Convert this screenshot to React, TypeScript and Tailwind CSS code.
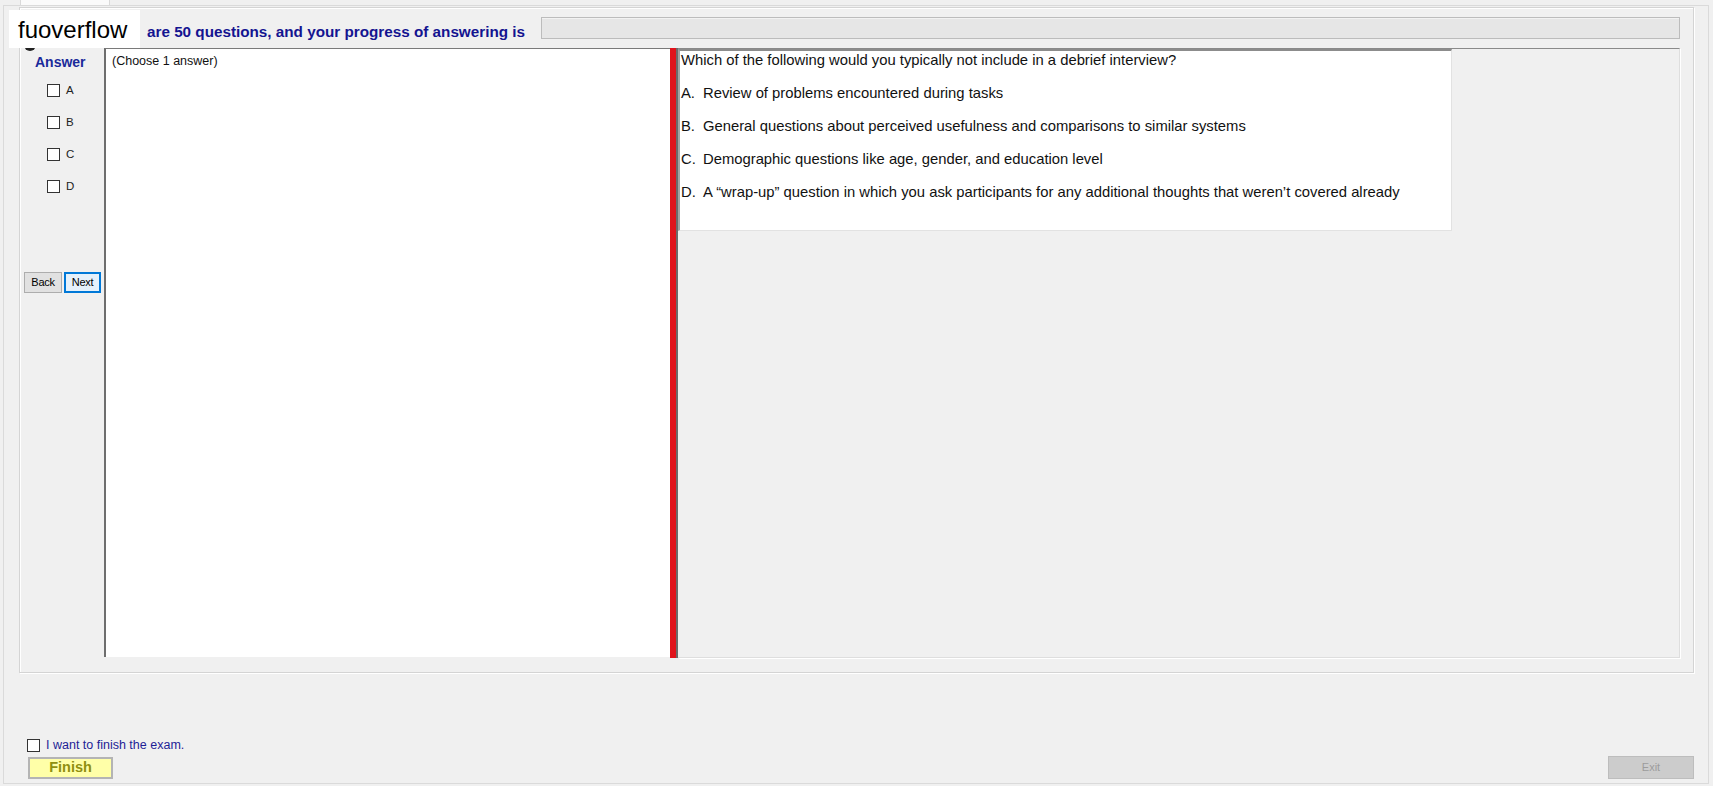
export default function App() {
  const options = [
    ["A.", "Review of problems encountered during tasks"],
    ["B.", "General questions about perceived usefulness and comparisons to similar systems"],
    ["C.", "Demographic questions like age, gender, and education level"],
    ["D.", "A \u201cwrap-up\u201d question in which you ask participants for any additional thoughts that weren\u2019t covered already"],
  ];
  return (
    <div className="w-[1713px] h-[786px] bg-[#f0f0f0] relative overflow-hidden font-['Liberation_Sans',Arial,sans-serif] text-black">
      {/* tab strip */}
      <div className="h-[5px] flex">
        <div className="ml-[20px] w-[90px] h-[5px] bg-[#fafafa] border-x border-[#d9d9d9]" />
      </div>
      {/* outer frame */}
      <div className="ml-[3px] w-[1706px] h-[779px] border border-[#dadada] flex flex-col">
        {/* group box */}
        <div className="mt-[1px] ml-[15px] w-[1675px] h-[666px] border border-[#d4d4d4] shadow-[inset_1px_1px_0_#ffffff,1px_1px_0_#ffffff] flex flex-col">
          {/* header */}
          <div className="h-[40px] flex shrink-0">
            <div className="ml-[127px] w-[394px] pt-[15px] text-[15.25px] leading-[18px] font-bold text-[#141490] whitespace-nowrap">
              are 50 questions, and your progress of answering is
            </div>
            <div className="mt-[9px] h-[22px] w-[1139px] border border-[#bcbcbc] bg-[#e6e6e6] shadow-[inset_0_1px_0_#f2f2f2]" />
          </div>
          {/* main panel */}
          <div className="flex h-[610px] w-[1660px] shrink-0">
            {/* left column */}
            <div className="w-[84px] flex flex-col">
              <div className="pt-[6px] pl-[15px] text-[14px] leading-[17px] font-bold text-[#1a2a9a]">Answer</div>
              <div className="mt-[3px] flex flex-col">
                {["A", "B", "C", "D"].map((l) => (
                  <div key={l} className="h-[32px] flex items-center pl-[27px] gap-[6px]">
                    <div className="w-[13px] h-[13px] bg-white border border-[#333333]" />
                    <span className="text-[11.5px] leading-[13px] text-[#222222]">{l}</span>
                  </div>
                ))}
              </div>
              <div className="mt-[70px] flex pl-[4px] gap-[2px]">
                <div className="w-[38px] h-[21px] bg-[#e1e1e1] border border-[#adadad] flex items-center justify-center text-[11px] tracking-[-0.3px] text-black">Back</div>
                <div className="w-[37px] h-[21px] bg-[#e5f1fb] border-2 border-[#0078d7] flex items-center justify-center text-[11px] tracking-[-0.3px] text-black">Next</div>
              </div>
            </div>
            {/* middle white panel */}
            <div className="w-[566px] h-[609px] bg-white border-t border-t-[#7a7a7a] border-l-2 border-l-[#6e6e6e] pl-[6px] pt-[5px] text-[12.5px] leading-[15px] text-[#111111]">
              (Choose 1 answer)
            </div>
            {/* red divider */}
            <div className="w-[6px] bg-[#e0141c]" />
            <div className="w-[2px] bg-[#6b6b6b]" />
            {/* right section */}
            <div className="flex-1 flex flex-col border-t border-t-[#8a8a8a] border-r border-r-[#dedede] border-b border-b-[#dedede] shadow-[1px_1px_0_#ffffff]">
              <div className="w-[774px] h-[182px] bg-white border-t-2 border-t-[#8c8c8c] border-l-2 border-l-[#a3a3a3] border-r border-r-[#e2e2e2] border-b border-b-[#e2e2e2] pl-[1px] pt-[1px] flex flex-col gap-[16px] text-[14.8px] leading-[17px] text-[#111111]">
                <div className="whitespace-nowrap">Which of the following would you typically not include in a debrief interview?</div>
                {options.map(([k, t]) => (
                  <div key={k} className="flex whitespace-nowrap">
                    <span className="w-[22px] shrink-0">{k}</span>
                    <span>{t}</span>
                  </div>
                ))}
              </div>
            </div>
          </div>
        </div>
        {/* bottom area */}
        <div className="mt-[65px] flex items-center pl-[23px] gap-[6px]">
          <div className="w-[13px] h-[13px] bg-white border border-[#333333]" />
          <span className="text-[12.5px] leading-[14px] text-[#1e1e96]">I want to finish the exam.</span>
        </div>
        <div className="mt-[5px] flex items-start">
          <div className="ml-[24px] w-[85px] h-[22px] bg-[#ffffa8] border-2 border-[#b4b4b4] flex items-center justify-center text-[14.5px] font-bold text-[#8f8f10]">
            Finish
          </div>
          <div className="ml-auto mr-[14px] -mt-[1px] w-[86px] h-[23px] bg-[#cccccc] border border-[#bdbdbd] flex items-center justify-center text-[11px] text-[#9c9c9c]">
            Exit
          </div>
        </div>
      </div>
      {/* watermark overlay */}
      <div className="absolute left-[24px] top-[39px] w-[12px] h-[12px] rounded-full bg-[#222222]" />
      <div className="absolute left-[9px] top-[10px] w-[131px] h-[38px] bg-white pl-[9px] pt-[6px] text-[24px] leading-[28px] text-black">
        fuoverflow
      </div>
    </div>
  );
}
